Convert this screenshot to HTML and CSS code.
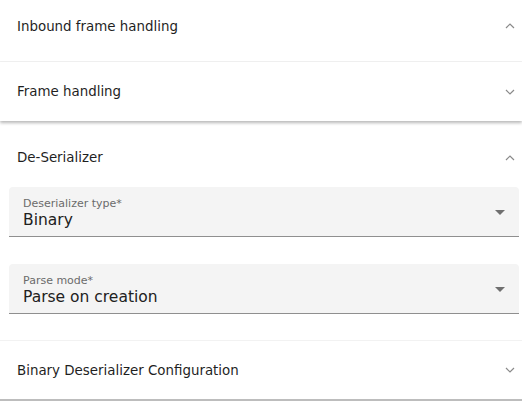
FILE: index.html
```html
<!DOCTYPE html>
<html lang="en">
<head>
  <meta charset="UTF-8">
  <meta name="viewport" content="width=device-width, initial-scale=1.0">
  <title>Connector settings</title>
  <link rel="stylesheet" href="styles.css">
</head>
<body>
  <div class="accordion">
    <div class="panel panel-first">
      <div class="panel-header">
        <span class="panel-title">Inbound frame handling</span>
        <svg class="chevron" viewBox="0 0 10 6"><path d="M1 5 L5 1 L9 5"/></svg>
      </div>
    </div>

    <div class="panel panel-raised">
      <div class="panel-header">
        <span class="panel-title">Frame handling</span>
        <svg class="chevron" viewBox="0 0 10 6"><path d="M1 1 L5 5 L9 1"/></svg>
      </div>
    </div>

    <div class="panel panel-open">
      <div class="panel-header header-open">
        <span class="panel-title">De-Serializer</span>
        <svg class="chevron" viewBox="0 0 10 6"><path d="M1 5 L5 1 L9 5"/></svg>
      </div>
      <div class="panel-body">
        <div class="field">
          <div class="field-text">
            <label class="field-label">Deserializer type*</label>
            <div class="field-value">Binary</div>
          </div>
          <span class="select-arrow"></span>
        </div>
        <div class="field">
          <div class="field-text">
            <label class="field-label">Parse mode*</label>
            <div class="field-value">Parse on creation</div>
          </div>
          <span class="select-arrow"></span>
        </div>
      </div>
    </div>

    <div class="panel panel-last">
      <div class="panel-header">
        <span class="panel-title">Binary Deserializer Configuration</span>
        <svg class="chevron" viewBox="0 0 10 6"><path d="M1 1 L5 5 L9 1"/></svg>
      </div>
    </div>
  </div>
</body>
</html>
```

FILE: styles.css
```css
body {
  margin: 0;
  background: #fff;
  font-family: "DejaVu Sans", "Noto Sans", sans-serif;
  color: #212121;
}

.accordion {
  display: flex;
  flex-direction: column;
  width: 522px;
}

.panel {
  background: #fff;
}

.panel-first {
  padding-bottom: 9px;
  border-bottom: 1px solid #f2f2f2;
}

/* collapsed panel above the open one casts a small shadow */
.panel-raised {
  position: relative;
  z-index: 2;
  box-shadow: 0 2px 3px rgba(0, 0, 0, 0.28);
}

.panel-open {
  border-bottom: 1px solid #f2f2f2;
}

.panel-last {
  border-bottom: 2px solid #bdbdbd;
}

.panel-header {
  display: flex;
  align-items: center;
  justify-content: space-between;
  height: 58px;
  padding: 0 7px 0 17px;
  box-sizing: border-box;
}

.panel-first .panel-header {
  height: 52px;
}

.panel-raised .panel-header {
  height: 59px;
}

.header-open {
  height: 66px;
  padding-top: 7px;
}

.panel-title {
  font-size: 13.4px;
  font-weight: 500;
  color: #1f1f1f;
}

.chevron {
  width: 10px;
  height: 6px;
  fill: none;
  stroke: #8a8a8a;
  stroke-width: 1.2;
}

.panel-body {
  display: flex;
  flex-direction: column;
  gap: 27px;
  padding: 0 3px 26px 9px;
}

.field {
  display: flex;
  align-items: center;
  justify-content: space-between;
  height: 50px;
  padding: 0 14px;
  box-sizing: border-box;
  background: #f4f4f4;
  border-radius: 4px 4px 0 0;
  border-bottom: 1px solid #8f8f8f;
}

.field-text {
  display: flex;
  flex-direction: column;
  gap: 1px;
  padding-top: 2px;
}

.field-label {
  font-size: 11px;
  color: #6b6b6b;
}

.field-value {
  font-size: 15.5px;
  color: #212121;
}

.select-arrow {
  width: 0;
  height: 0;
  border-left: 5px solid transparent;
  border-right: 5px solid transparent;
  border-top: 5px solid #6f6f6f;
  margin-top: 2px;
}
```
